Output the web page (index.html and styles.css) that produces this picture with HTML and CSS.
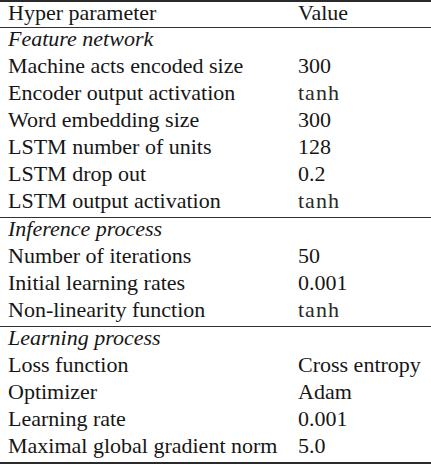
FILE: index.html
```html
<!DOCTYPE html>
<html>
<head>
<meta charset="utf-8">
<link rel="stylesheet" href="styles.css">
</head>
<body>
<div class="tbl">
  <div class="row head"><span class="k">Hyper parameter</span><span class="v">Value</span></div>
  <div class="section">
    <div class="row cat"><span class="k">Feature network</span></div>
    <div class="row"><span class="k">Machine acts encoded size</span><span class="v">300</span></div>
    <div class="row"><span class="k">Encoder output activation</span><span class="v math">tanh</span></div>
    <div class="row"><span class="k">Word embedding size</span><span class="v">300</span></div>
    <div class="row"><span class="k">LSTM number of units</span><span class="v">128</span></div>
    <div class="row"><span class="k">LSTM drop out</span><span class="v">0.2</span></div>
    <div class="row"><span class="k">LSTM output activation</span><span class="v math">tanh</span></div>
  </div>
  <div class="section">
    <div class="row cat"><span class="k">Inference process</span></div>
    <div class="row"><span class="k">Number of iterations</span><span class="v">50</span></div>
    <div class="row"><span class="k">Initial learning rates</span><span class="v">0.001</span></div>
    <div class="row"><span class="k">Non-linearity function</span><span class="v math">tanh</span></div>
  </div>
  <div class="section last">
    <div class="row cat"><span class="k">Learning process</span></div>
    <div class="row"><span class="k">Loss function</span><span class="v">Cross entropy</span></div>
    <div class="row"><span class="k">Optimizer</span><span class="v">Adam</span></div>
    <div class="row"><span class="k">Learning rate</span><span class="v">0.001</span></div>
    <div class="row"><span class="k">Maximal global gradient norm</span><span class="v">5.0</span></div>
  </div>
</div>
</body>
</html>
```
FILE: styles.css
```css
html, body {
  margin: 0;
  padding: 0;
  background: #ffffff;
}
.tbl {
  width: 431px;
  border-top: 2px solid #2a2a2a;
  border-bottom: 2px solid #2a2a2a;
  font-family: "Liberation Serif", "Times New Roman", serif;
  font-size: 22px;
  color: #161616;
}
.row {
  display: grid;
  grid-template-columns: 290px 1fr;
  padding-left: 8px;
  height: 27px;
  line-height: 22px;
  box-sizing: border-box;
  white-space: nowrap;
}
.row.head {
  height: 26px;
  border-bottom: 1px solid #333;
}
.section {
  border-bottom: 1px solid #333;
}
.section.last {
  border-bottom: none;
}
.cat .k {
  font-style: italic;
}
.math {
  letter-spacing: 1px;
  color: #2a2a2a;
}
```
